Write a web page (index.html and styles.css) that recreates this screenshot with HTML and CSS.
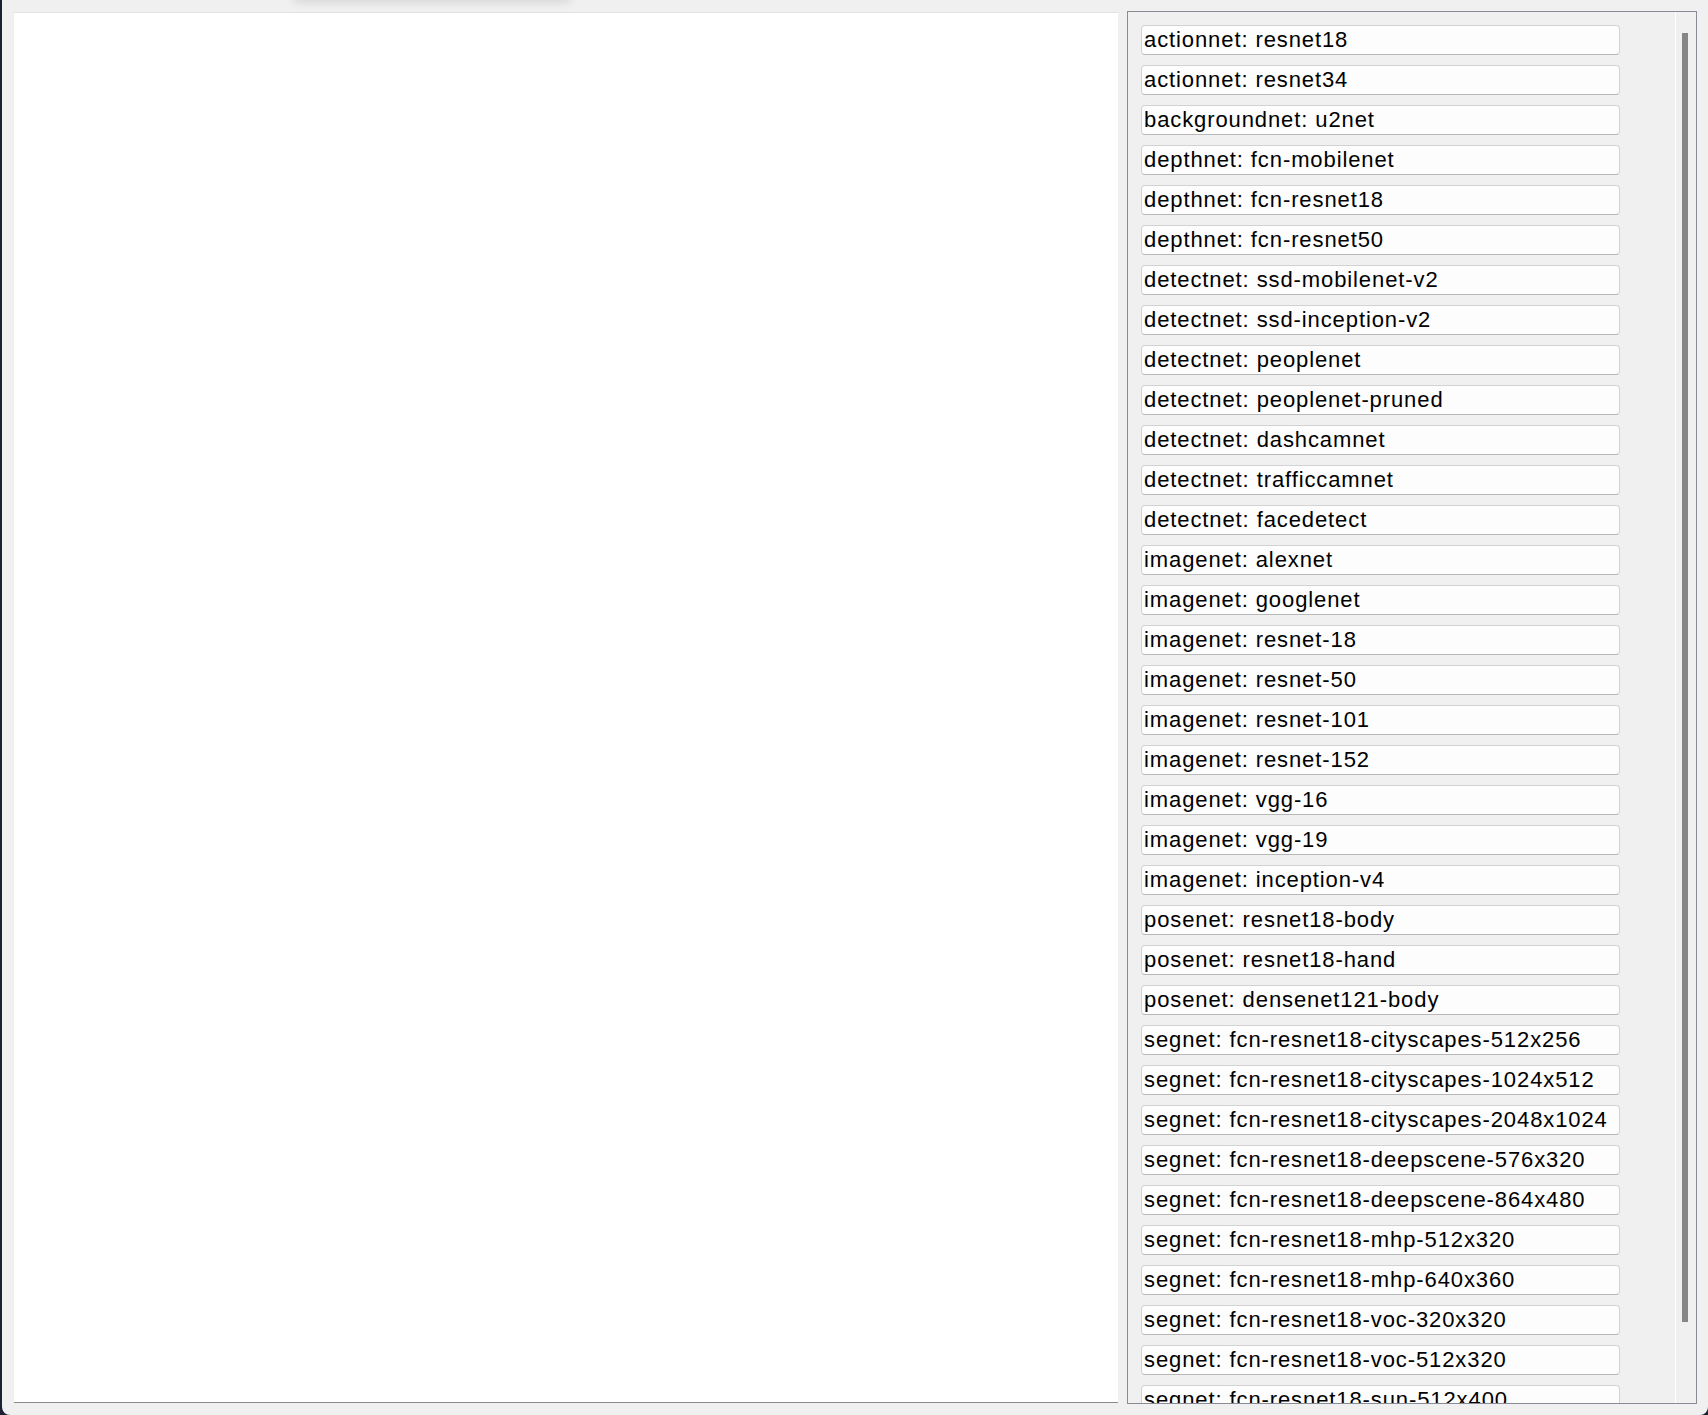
FILE: index.html
```html
<!DOCTYPE html>
<html lang="en">
<head>
  <meta charset="UTF-8" />
  <title>Model Downloader</title>
  <link rel="stylesheet" href="styles.css">
</head>
<body>
  <div class="window">
    <div class="top-shadow"></div>
    <div class="canvas"></div>
    <div class="panel">
      <div class="model-list">
        <div class="model">actionnet: resnet18</div>
        <div class="model">actionnet: resnet34</div>
        <div class="model">backgroundnet: u2net</div>
        <div class="model">depthnet: fcn-mobilenet</div>
        <div class="model">depthnet: fcn-resnet18</div>
        <div class="model">depthnet: fcn-resnet50</div>
        <div class="model">detectnet: ssd-mobilenet-v2</div>
        <div class="model">detectnet: ssd-inception-v2</div>
        <div class="model">detectnet: peoplenet</div>
        <div class="model">detectnet: peoplenet-pruned</div>
        <div class="model">detectnet: dashcamnet</div>
        <div class="model">detectnet: trafficcamnet</div>
        <div class="model">detectnet: facedetect</div>
        <div class="model">imagenet: alexnet</div>
        <div class="model">imagenet: googlenet</div>
        <div class="model">imagenet: resnet-18</div>
        <div class="model">imagenet: resnet-50</div>
        <div class="model">imagenet: resnet-101</div>
        <div class="model">imagenet: resnet-152</div>
        <div class="model">imagenet: vgg-16</div>
        <div class="model">imagenet: vgg-19</div>
        <div class="model">imagenet: inception-v4</div>
        <div class="model">posenet: resnet18-body</div>
        <div class="model">posenet: resnet18-hand</div>
        <div class="model">posenet: densenet121-body</div>
        <div class="model">segnet: fcn-resnet18-cityscapes-512x256</div>
        <div class="model">segnet: fcn-resnet18-cityscapes-1024x512</div>
        <div class="model">segnet: fcn-resnet18-cityscapes-2048x1024</div>
        <div class="model">segnet: fcn-resnet18-deepscene-576x320</div>
        <div class="model">segnet: fcn-resnet18-deepscene-864x480</div>
        <div class="model">segnet: fcn-resnet18-mhp-512x320</div>
        <div class="model">segnet: fcn-resnet18-mhp-640x360</div>
        <div class="model">segnet: fcn-resnet18-voc-320x320</div>
        <div class="model">segnet: fcn-resnet18-voc-512x320</div>
        <div class="model">segnet: fcn-resnet18-sun-512x400</div>
      </div>
      <div class="scrollbar">
        <div class="thumb"></div>
      </div>
    </div>
  </div>
</body>
</html>
```

FILE: styles.css
```css
html {
  background-color: #1b2130;
}
body {
  margin: 0;
  height: 1415px;
  overflow: hidden;
  font-family: 'Liberation Sans', Arial, sans-serif;
}
.window {
  position: relative;
  margin-left: 2px;
  height: 1415px;
  box-sizing: border-box;
  background-color: #f0f0f0;
  border-radius: 0 0 8px 8px;
  display: flex;
  padding: 11px 11px 11px 12px;
  overflow: hidden;
}
.top-shadow {
  position: absolute;
  top: -14px;
  left: 290px;
  width: 280px;
  height: 14px;
  border-radius: 8px;
  box-shadow: 0 2px 10px rgba(0, 0, 0, 0.12);
}
.canvas {
  width: 1104px;
  margin-top: 1px;
  margin-bottom: 1px;
  background: #fff;
  border-top: 1px solid #e3e3e3;
  border-bottom: 1px solid #8a8a8a;
  box-sizing: border-box;
}
.panel {
  margin-left: 9px;
  width: 570px;
  border: 1px solid #878c96;
  box-sizing: border-box;
  display: flex;
}
.model-list {
  flex: 1;
  overflow: hidden;
  padding: 13px 0 0 13px;
  display: flex;
  flex-direction: column;
  gap: 10px;
}
.model {
  flex: none;
  width: 479px;
  height: 30px;
  box-sizing: border-box;
  padding-left: 2px;
  background: #fdfdfd;
  border: 1px solid #d2d2d2;
  border-bottom-color: #b8b8b8;
  border-radius: 4px;
  font-size: 22px;
  line-height: 28px;
  letter-spacing: 0.9px;
  color: #000;
  white-space: nowrap;
}
.scrollbar {
  width: 20px;
  border-left: 1px solid #fff;
}
.thumb {
  margin: 21px 0 0 6px;
  width: 6px;
  height: 1289px;
  background: #868686;
}
```
